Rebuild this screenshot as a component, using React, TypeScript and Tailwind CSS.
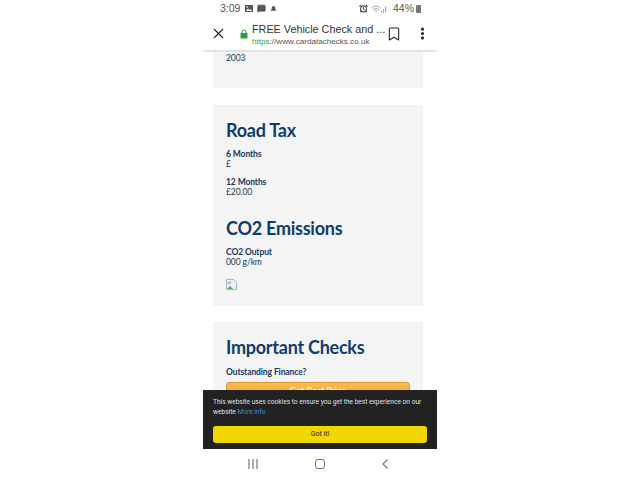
import { X, Bookmark, EllipsisVertical, MessageSquare, AlarmClock, Wifi } from 'lucide-react';

const Detail = ({ label, value }: { label: string; value: string }) => (
  <div className="mb-[9px] text-[8.5px] leading-[9.5px] text-[#1f3a55]">
    <div className="font-bold tracking-[-0.1px] text-[#14375a]">{label}</div>
    <div className="tracking-[-0.1px]">{value}</div>
  </div>
);

const StatusBar = () => (
  <div className="flex h-[17px] shrink-0 items-center pl-[17px] pr-[16px] text-[10.5px] text-[#555]">
    <span>3:09</span>
    <svg width="8" height="7" viewBox="0 0 8 7" className="ml-[5px]">
      <rect width="8" height="7" rx="0.500" fill="#555" />
      <path d="M1 6l2-2.500L4.500 5 5.500 4 7 6z" fill="#fff" />
      <circle cx="2.200" cy="2" r="0.800" fill="#fff" />
    </svg>
    <MessageSquare size={9} fill="#555" className="ml-[4px]" />
    <svg width="7" height="8" viewBox="0 0 8 8" className="ml-[4px]">
      <path d="M4 0.5c1.5 0 2 1.2 2 2.6 0 1.4 1 2.2 1.4 3H0.6C1 5.3 2 4.500 2 3.100 2 1.700 2.500 0.500 4 0.500z" fill="#555" />
    </svg>
    <div className="ml-auto flex items-center">
      <AlarmClock size={9} strokeWidth={3} />
      <Wifi size={10} className="ml-[3px] text-[#999]" />
      <svg width="6" height="8" viewBox="0 0 7 8">
        <path d="M0 8h1V6H0zM2.500 8h1V4h-1zM5 8h1V1H5z" fill="#888" />
      </svg>
      <span className="ml-[6px]">44%</span>
      <div className="ml-[2px] h-[8px] w-[5px] rounded-[1px] bg-[#777]" />
    </div>
  </div>
);

const Toolbar = () => (
  <div className="flex h-[35px] shrink-0 items-center border-b-2 border-[#e2e2e2] pl-[7px] pr-[7px]">
    <X size={17} strokeWidth={1.6} className="text-[#222]" />
    <svg width="8" height="10" viewBox="0 0 8 10" className="ml-[13px]">
      <path d="M2 4.500V3a2 2 0 0 1 4 0v1.500" fill="none" stroke="#2f9e44" strokeWidth="1" />
      <rect x="0.500" y="4" width="7" height="5.500" rx="0.600" fill="#2f9e44" />
    </svg>
    <div className="ml-[4px] w-[125px] whitespace-nowrap pt-[2px]">
      <div className="text-[10.8px] leading-[13px] text-[#333]">FREE Vehicle Check and ...</div>
      <div className="text-[8.1px] leading-[11px] text-[#555]">
        <span className="text-[#2f9e44]">https</span>://www.cardatachecks.co.uk
      </div>
    </div>
    <Bookmark size={16} strokeWidth={1.6} className="ml-[9px] text-[#222]" />
    <EllipsisVertical size={15} strokeWidth={3} className="ml-auto text-[#222]" />
  </div>
);

export default function App() {
  return (
    <div className="flex h-[480px] justify-center bg-white font-['Liberation_Sans',sans-serif]">
      <div className="relative flex h-full w-[234px] flex-col overflow-hidden bg-white">
        <StatusBar />
        <Toolbar />
        <div className="min-h-0 flex-1 overflow-hidden pl-[10px] pr-[14px] font-['Lato',sans-serif]">
          <div className="mb-[17px] h-[36px] bg-[#f4f4f4] px-[13px] pt-[1px] text-[8.5px] leading-[10px] tracking-[-0.1px] text-[#1f3a55]">2003</div>
          <div className="mb-[16px] h-[201px] bg-[#f4f4f4] px-[13px] pt-[13px]">
            <h2 className="mb-[8px] text-[18px] font-bold leading-[24px] tracking-[-0.25px] text-[#0f3d6b]">Road Tax</h2>
            <Detail label="6 Months" value="£" />
            <Detail label="12 Months" value="£20.00" />
            <h2 className="mb-[8px] mt-[19px] text-[18px] font-bold leading-[24px] tracking-[-0.25px] text-[#0f3d6b]">CO2 Emissions</h2>
            <Detail label="CO2 Output" value="000 g/km" />
            <svg width="11" height="11" viewBox="0 0 11 11" className="mt-[12px]">
              <path d="M0.500 0.500h7l3 3v7h-10z" fill="#eef2f6" stroke="#a9b4bf" />
              <path d="M1 10l3-3 2 2 1 1z" fill="#4caf50" />
              <path d="M1 4l3-2 2 1-3 3z" fill="#9cc1e8" />
            </svg>
          </div>
          <div className="h-[90px] bg-[#f4f4f4] px-[13px] pt-[13px]">
            <h2 className="mb-[9px] text-[18px] font-bold leading-[24px] tracking-[-0.25px] text-[#0f3d6b]">Important Checks</h2>
            <div className="text-[8.5px] font-bold leading-[8px] tracking-[-0.1px] text-[#14375a]">Outstanding Finance?</div>
            <button className="h-[22px] w-[184px] rounded-[3px] border border-[#d99a2e] bg-gradient-to-b from-[#f9bb50] to-[#f2a02c] pb-[4px] text-[9px] text-white">
              Get Best Price
            </button>
          </div>
        </div>

        {/* cookie notice sits over the page */}
        <div className="absolute left-0 top-[390px] h-[59px] w-full bg-[#222222] px-[10px] pt-[7px] font-['Roboto',sans-serif]">
          <p className="text-[6.6px] leading-[10px] text-[#e0e0e0]">
            This website uses cookies to ensure you get the best experience on our website <span className="text-[#3d8fd1]">More info</span>
          </p>
          <button className="mt-[9px] h-[17px] w-full rounded-[3px] bg-[#f1d600] text-[7px] text-[#222]">Got it!</button>
        </div>

        <div className="flex h-[31px] shrink-0 items-center justify-between pb-[1px] pl-[45px] pr-[49px] text-[#777]">
          <svg width="10" height="10" viewBox="0 0 10 10" stroke="currentColor" strokeWidth="1.200">
            <path d="M1 0v10M5 0v10M9 0v10" />
          </svg>
          <div className="h-[10px] w-[10px] rounded-[3px] border-[1.500px] border-[#777]" />
          <svg width="6" height="10" viewBox="0 0 6 10" fill="none" stroke="currentColor" strokeWidth="1.200">
            <path d="M5.500 0.500L1 5l4.500 4.500" />
          </svg>
        </div>
      </div>
    </div>
  );
}
